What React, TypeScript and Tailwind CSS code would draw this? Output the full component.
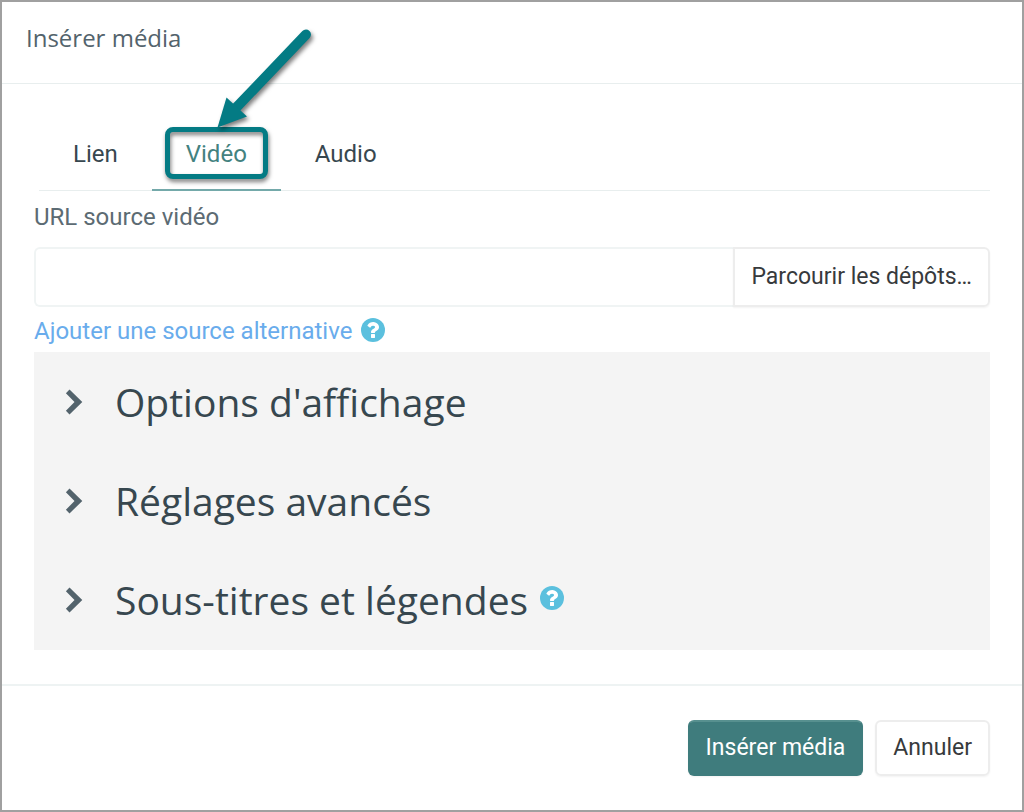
import React, { useState } from "react";

const tabs = ["Lien", "Vidéo", "Audio"];

const sections = [
  { title: "Options d'affichage", help: false },
  { title: "Réglages avancés", help: false },
  { title: "Sous-titres et légendes", help: true },
];

function HelpIcon() {
  return (
    <svg viewBox="128 128 1536 1536" className="size-6" aria-hidden="true">
      <circle cx="896" cy="896" r="768" fill="#5bc0de" />
      <path
        fill="#fff"
        d="M1024 1376v-192q0-14-9-23t-23-9h-192q-14 0-23 9t-9 23v192q0 14 9 23t23 9h192q14 0 23-9t9-23zm256-672q0-88-55.500-163t-138.500-116-170-41q-243 0-371 213-15 24 8 42l132 100q7 6 19 6 16 0 25-12 53-68 86-92 34-24 86-24 48 0 85.500 26t37.500 59q0 38-20 61t-68 45q-63 28-115.500 86.500t-52.500 125.500v36q0 14 9 23t23 9h192q14 0 23-9t9-23q0-19 21.500-49.500t54.500-49.500q32-18 49-28.500t46-35 44.500-48 28-60.500 12.500-81z"
      />
    </svg>
  );
}

function Chevron() {
  return (
    <svg viewBox="0 0 18 26" className="h-[26px] w-[18px] shrink-0 fill-[#53636c]" aria-hidden="true">
      <path d="M4.500 .6 17.300 13 4.500 25.400 .9 21.800 9.500 13 .9 4.200Z" />
    </svg>
  );
}

function Callout() {
  return (
    <>
      <span className="pointer-events-none absolute inset-x-[13px] top-[9px] h-[52px] rounded-lg border-5 border-[#047b84] drop-shadow-[1px_3px_2px_rgba(0,0,0,0.5)]" />
      <svg
        viewBox="0 0 110 110"
        className="pointer-events-none absolute top-[-95px] left-[58px] size-[110px] drop-shadow-[2px_3px_2px_rgba(0,0,0,0.5)]"
        aria-hidden="true"
      >
        <path d="M96 11.500 22 89" stroke="#047b84" strokeWidth="10" strokeLinecap="round" />
        <path d="M7.500 104.500 16.500 74.500 37 93.500Z" fill="#047b84" />
      </svg>
    </>
  );
}

export default function App() {
  const [active, setActive] = useState("Vidéo");
  return (
    <div
      role="dialog"
      aria-labelledby="dialog-title"
      className="flex min-h-screen flex-col border-2 border-[#a0a0a0] bg-white font-['Roboto',sans-serif] text-2xl text-[#37474f]"
    >
      <header className="border-b border-[#e8eeee] px-6 pt-5 pb-[29px]">
        <h1 id="dialog-title" className="font-['Open_Sans',sans-serif] text-2xl text-[#53636c]">
          Insérer média
        </h1>
      </header>

      <main className="flex-1 px-8 pt-[34px] pb-[34px]">
        <div role="tablist" className="ml-[5px] flex border-b border-[#e8eeee]">
          {tabs.map((tab) => (
            <button
              key={tab}
              type="button"
              role="tab"
              aria-selected={tab === active}
              onClick={() => setActive(tab)}
              className={
                tab === active
                  ? "relative -mb-px border-b-2 border-[#74a9aa] px-[34px] pt-5 pb-[19px] text-[#43827f]"
                  : "relative -mb-px border-b-2 border-transparent px-[34px] pt-5 pb-[19px]"
              }
            >
              {tab}
              {tab === "Vidéo" && <Callout />}
            </button>
          ))}
        </div>

        <label htmlFor="source-url" className="mt-[10px] block text-[#5c6b73]">
          URL source vidéo
        </label>
        <div className="mt-[14px] flex h-[60px]">
          <input
            id="source-url"
            type="text"
            className="min-w-0 flex-1 rounded-l-md border-2 border-r-0 border-[#f0f4f4] px-4 outline-none"
          />
          <button
            type="button"
            className="rounded-r-md border-2 border-[#ededed] px-4 text-[23px] text-[#373a3c] shadow-xs"
          >
            Parcourir les dépôts…
          </button>
        </div>
        <div className="mt-2 flex items-start gap-[9px]">
          <a href="#alternative" className="text-[#69acec]">
            Ajouter une source alternative
          </a>
          <button type="button" aria-label="Aide : source alternative" className="mt-[3px]">
            <HelpIcon />
          </button>
        </div>

        <div className="mt-[5px] bg-[#f4f4f4] pb-px">
          {sections.map((section) => (
            <div key={section.title} className="flex h-[99px] items-center pl-[31px]">
              <button type="button" aria-expanded="false" className="flex items-center gap-8 text-left">
                <Chevron />
                <span className="font-['Open_Sans',sans-serif] text-[39px]">{section.title}</span>
              </button>
              {section.help && (
                <button type="button" aria-label="Aide : sous-titres" className="mb-1 ml-3">
                  <HelpIcon />
                </button>
              )}
            </div>
          ))}
        </div>
      </main>

      <footer className="flex justify-end gap-3 border-t-2 border-[#eef3f3] px-8 py-[34px] text-[23px]">
        <button
          type="button"
          className="h-14 rounded-md border-2 border-[#3f7c7d] border-t-[#57908f] bg-[#3f7c7d] px-4 text-white shadow-xs"
        >
          Insérer média
        </button>
        <button type="button" className="h-14 rounded-md border-2 border-[#ededed] px-4 text-[#373a3c] shadow-xs">
          Annuler
        </button>
      </footer>
    </div>
  );
}
